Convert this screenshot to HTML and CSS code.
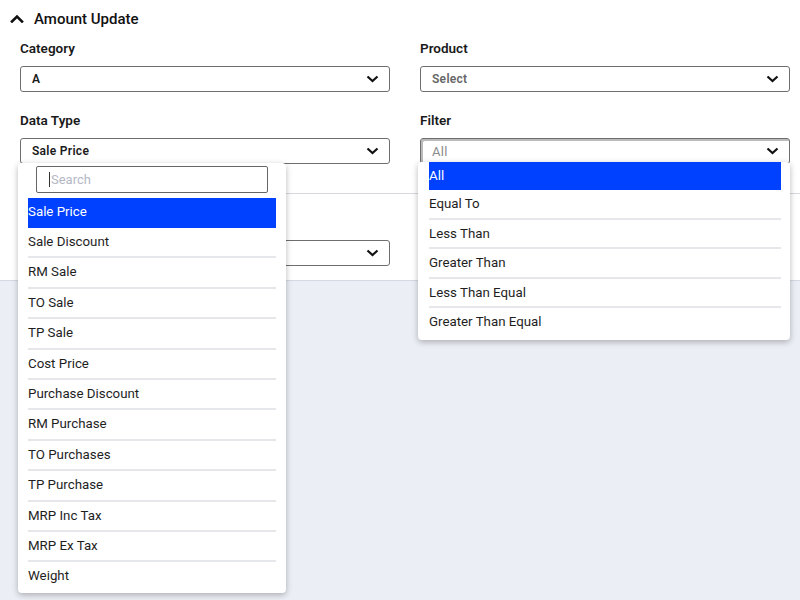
FILE: index.html
```html
<!DOCTYPE html>
<html lang="en">
<head>
    <meta charset="UTF-8">
    <meta name="viewport" content="width=device-width, initial-scale=1.0">
    <title>Amount Update</title>
    <link rel="stylesheet" href="styles.css">
</head>
<body>
    <div class="panel">
        <div class="panel-header">
            <svg class="collapse-icon" width="14" height="10" viewBox="0 0 14 10">
                <polyline points="2,8.5 7,3.5 12,8.5" fill="none" stroke="#111" stroke-width="2.6" stroke-linecap="square"/>
            </svg>
            <span>Amount Update</span>
        </div>

        <div class="form-grid">
            <div class="form-group">
                <label>Category</label>
                <div class="select-box">
                    <span class="value">A</span>
                    <svg class="chevron" width="13" height="8" viewBox="0 0 13 8"><polyline points="1.5,1.5 6.5,6 11.5,1.5" fill="none" stroke="#111" stroke-width="2.2"/></svg>
                </div>
            </div>

            <div class="form-group">
                <label>Product</label>
                <div class="select-box">
                    <span class="value placeholder">Select</span>
                    <svg class="chevron" width="13" height="8" viewBox="0 0 13 8"><polyline points="1.5,1.5 6.5,6 11.5,1.5" fill="none" stroke="#111" stroke-width="2.2"/></svg>
                </div>
            </div>

            <div class="form-group">
                <label>Data Type</label>
                <div class="select-box">
                    <span class="value">Sale Price</span>
                    <svg class="chevron" width="13" height="8" viewBox="0 0 13 8"><polyline points="1.5,1.5 6.5,6 11.5,1.5" fill="none" stroke="#111" stroke-width="2.2"/></svg>
                </div>

                <!-- open menu for data type -->
                <div class="dropdown dropdown-search">
                    <div class="search-box"><span class="caret"></span>Search</div>
                    <ul class="options">
                        <li class="active">Sale Price</li>
                        <li>Sale Discount</li>
                        <li>RM Sale</li>
                        <li>TO Sale</li>
                        <li>TP Sale</li>
                        <li>Cost Price</li>
                        <li>Purchase Discount</li>
                        <li>RM Purchase</li>
                        <li>TO Purchases</li>
                        <li>TP Purchase</li>
                        <li>MRP Inc Tax</li>
                        <li>MRP Ex Tax</li>
                        <li>Weight</li>
                    </ul>
                </div>
            </div>

            <div class="form-group">
                <label>Filter</label>
                <div class="select-box focused">
                    <span class="value muted">All</span>
                    <svg class="chevron" width="13" height="8" viewBox="0 0 13 8"><polyline points="1.5,1.5 6.5,6 11.5,1.5" fill="none" stroke="#111" stroke-width="2.2"/></svg>
                </div>

                <!-- open menu for filter -->
                <div class="dropdown dropdown-filter">
                    <ul class="options">
                        <li class="active">All</li>
                        <li>Equal To</li>
                        <li>Less Than</li>
                        <li>Greater Than</li>
                        <li>Less Than Equal</li>
                        <li>Greater Than Equal</li>
                    </ul>
                </div>
            </div>
        </div>

        <div class="form-grid second-row">
            <div class="form-group">
                <label class="blank"></label>
                <div class="select-box">
                    <span class="value"></span>
                    <svg class="chevron" width="13" height="8" viewBox="0 0 13 8"><polyline points="1.5,1.5 6.5,6 11.5,1.5" fill="none" stroke="#111" stroke-width="2.2"/></svg>
                </div>
            </div>
        </div>
    </div>
</body>
</html>
```

FILE: styles.css
```css
* {
    box-sizing: border-box;
}

body {
    margin: 0;
    font-family: Roboto, 'Liberation Sans', Arial, sans-serif;
    color: #222;
    background-color: #eceef6;
    height: 600px;
    overflow: hidden;
}

.panel {
    background-color: #fff;
    height: 281px;
    border-bottom: 1px solid #d6d9e4;
}

.panel-header {
    display: flex;
    align-items: center;
    gap: 10px;
    padding: 8px 0 0 10px;
    height: 30px;
    font-size: 15px;
    font-weight: 500;
    color: #111;
}

.collapse-icon {
    margin-top: -2px;
}

.form-grid {
    display: grid;
    grid-template-columns: 370px 370px;
    column-gap: 30px;
    row-gap: 20px;
    padding: 10px 10px 0 20px;
}

.form-grid.second-row {
    margin-left: 20px;
    margin-top: 29px;
    padding: 20px 10px 0 0;
    border-top: 1px solid #d6d9e4;
}

.form-group {
    position: relative;
}

label {
    display: block;
    height: 16px;
    line-height: 16px;
    margin-bottom: 10px;
    font-size: 13.5px;
    font-weight: 600;
    color: #1a1a1a;
}

.select-box {
    display: flex;
    align-items: center;
    justify-content: space-between;
    height: 26px;
    padding: 0 10px 0 11px;
    border: 1px solid #6e6e6e;
    border-radius: 3px;
    font-size: 12px;
    font-weight: 600;
    letter-spacing: 0.3px;
    color: #1a1a1a;
}

.select-box.focused {
    box-shadow: inset 2px 2px 0 #bbb;
}

.value.placeholder {
    color: #666;
}

.value.muted {
    color: #8a8a8a;
    font-weight: 400;
    font-size: 13px;
}

.dropdown {
    position: absolute;
    left: -2px;
    background-color: #fff;
    border-radius: 4px;
    box-shadow: 0 2px 6px rgba(0, 0, 0, 0.28);
    z-index: 10;
}

.dropdown-search {
    top: 51px;
    width: 268px;
    padding: 3px 10px 0;
}

.dropdown-filter {
    top: 50px;
    width: 372px;
    padding: 0 9px 2px 11px;
}

.search-box {
    display: flex;
    align-items: center;
    height: 27px;
    margin: 0 8px 5px;
    padding-left: 12px;
    border: 1px solid #666;
    border-radius: 2px;
    font-size: 13px;
    color: #b4b8c6;
}

.caret {
    width: 1px;
    height: 15px;
    background-color: #333;
    margin-right: 1px;
}

.options {
    list-style: none;
    margin: 0;
    padding: 0;
}

.options li {
    height: 30.4px;
    line-height: 28.4px;
    font-size: 13.3px;
    color: #1e1e1e;
    border-bottom: 2px solid #e6e7ea;
}

.options li:last-child {
    border-bottom: none;
}

.options li.active {
    height: 30px;
    line-height: 28px;
    background-color: #0041ff;
    color: #fff;
    border-bottom: none;
}

.dropdown-filter .options li {
    height: 29.6px;
    line-height: 27.6px;
}

.dropdown-filter .options li.active {
    height: 28px;
    line-height: 28px;
}
```
